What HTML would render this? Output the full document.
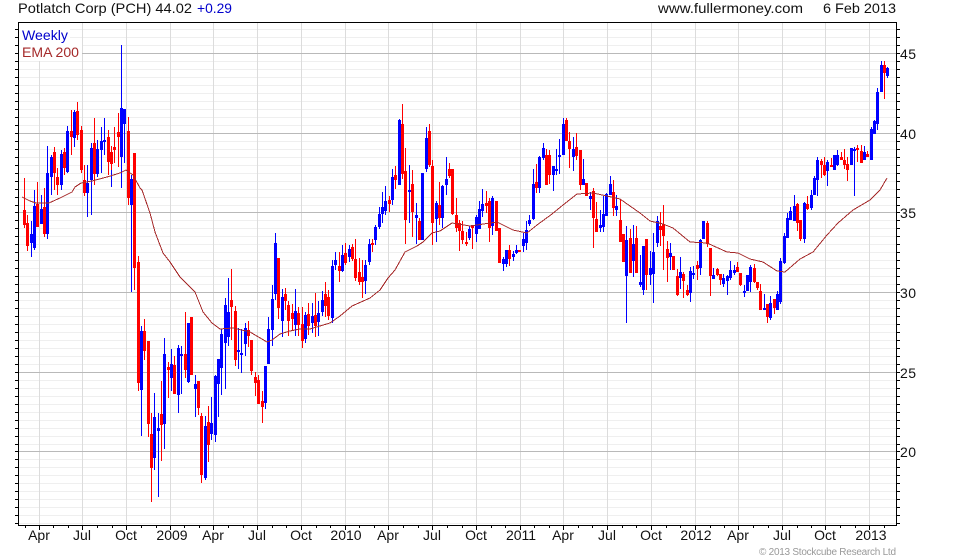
<!DOCTYPE html>
<html><head><meta charset="utf-8"><title>Potlatch Corp (PCH)</title>
<style>
html,body{margin:0;padding:0;background:#fff;width:980px;height:560px;overflow:hidden}
svg{display:block}
text{font-family:"Liberation Sans",Arial,sans-serif;font-size:14px;fill:#111}
.c{shape-rendering:crispEdges;fill:none}
</style></head><body>
<svg width="980" height="560" viewBox="0 0 980 560" xmlns="http://www.w3.org/2000/svg">
<rect width="980" height="560" fill="#fff"/>
<path class="c" stroke="#efefef" d="M19 29.5H896M19 37.5H896M19 45.5H896M19 61.5H896M19 69.5H896M19 77.5H896M19 85.5H896M19 93.5H896M19 101.5H896M19 109.5H896M19 117.5H896M19 125.5H896M19 141.5H896M19 149.5H896M19 157.5H896M19 165.5H896M19 173.5H896M19 181.5H896M19 189.5H896M19 197.5H896M19 205.5H896M19 220.5H896M19 228.5H896M19 236.5H896M19 244.5H896M19 252.5H896M19 260.5H896M19 268.5H896M19 276.5H896M19 284.5H896M19 300.5H896M19 308.5H896M19 316.5H896M19 324.5H896M19 332.5H896M19 340.5H896M19 348.5H896M19 356.5H896M19 364.5H896M19 380.5H896M19 388.5H896M19 396.5H896M19 404.5H896M19 412.5H896M19 420.5H896M19 428.5H896M19 436.5H896M19 444.5H896M19 459.5H896M19 467.5H896M19 475.5H896M19 483.5H896M19 491.5H896M19 499.5H896M19 507.5H896M19 515.5H896M19 523.5H896"/>
<path class="c" stroke="#dcdcdc" d="M39.5 23V525M82.5 23V525M126.5 23V525M170.5 23V525M213.5 23V525M257.5 23V525M301.5 23V525M345.5 23V525M388.5 23V525M432.5 23V525M476.5 23V525M520.5 23V525M563.5 23V525M607.5 23V525M651.5 23V525M695.5 23V525M738.5 23V525M782.5 23V525M825.5 23V525M869.5 23V525"/>
<path class="c" stroke="#b9b9b9" d="M19 53.5H896M19 133.5H896M19 212.5H896M19 292.5H896M19 372.5H896M19 451.5H896"/>
<rect x="19" y="23" width="51" height="18" fill="#fff"/>
<rect x="19" y="41" width="63" height="20" fill="#fff"/>
<path class="c" stroke="#000" d="M18.5 22.5H896.5V525.5H18.5Z"/>
<path class="c" stroke="#000" d="M15 29.5H18M15 37.5H18M15 45.5H18M15 53.5H18M15 61.5H18M15 69.5H18M15 77.5H18M15 85.5H18M15 93.5H18M15 101.5H18M15 109.5H18M15 117.5H18M15 125.5H18M15 133.5H18M15 141.5H18M15 149.5H18M15 157.5H18M15 165.5H18M15 173.5H18M15 181.5H18M15 189.5H18M15 197.5H18M15 205.5H18M15 212.5H18M15 220.5H18M15 228.5H18M15 236.5H18M15 244.5H18M15 252.5H18M15 260.5H18M15 268.5H18M15 276.5H18M15 284.5H18M15 292.5H18M15 300.5H18M15 308.5H18M15 316.5H18M15 324.5H18M15 332.5H18M15 340.5H18M15 348.5H18M15 356.5H18M15 364.5H18M15 372.5H18M15 380.5H18M15 388.5H18M15 396.5H18M15 404.5H18M15 412.5H18M15 420.5H18M15 428.5H18M15 436.5H18M15 444.5H18M15 451.5H18M15 459.5H18M15 467.5H18M15 475.5H18M15 483.5H18M15 491.5H18M15 499.5H18M15 507.5H18M15 515.5H18M15 523.5H18"/>
<path class="c" stroke="#000" d="M897 29.5H900M897 37.5H900M897 45.5H900M897 53.5H900M897 61.5H900M897 69.5H900M897 77.5H900M897 85.5H900M897 93.5H900M897 101.5H900M897 109.5H900M897 117.5H900M897 125.5H900M897 133.5H900M897 141.5H900M897 149.5H900M897 157.5H900M897 165.5H900M897 173.5H900M897 181.5H900M897 189.5H900M897 197.5H900M897 205.5H900M897 212.5H900M897 220.5H900M897 228.5H900M897 236.5H900M897 244.5H900M897 252.5H900M897 260.5H900M897 268.5H900M897 276.5H900M897 284.5H900M897 292.5H900M897 300.5H900M897 308.5H900M897 316.5H900M897 324.5H900M897 332.5H900M897 340.5H900M897 348.5H900M897 356.5H900M897 364.5H900M897 372.5H900M897 380.5H900M897 388.5H900M897 396.5H900M897 404.5H900M897 412.5H900M897 420.5H900M897 428.5H900M897 436.5H900M897 444.5H900M897 451.5H900M897 459.5H900M897 467.5H900M897 475.5H900M897 483.5H900M897 491.5H900M897 499.5H900M897 507.5H900M897 515.5H900M897 523.5H900"/>
<path class="c" stroke="#000" d="M39.5 526V530M82.5 526V530M126.5 526V530M170.5 526V530M213.5 526V530M257.5 526V530M301.5 526V530M345.5 526V530M388.5 526V530M432.5 526V530M476.5 526V530M520.5 526V530M563.5 526V530M607.5 526V530M651.5 526V530M695.5 526V530M738.5 526V530M782.5 526V530M825.5 526V530M869.5 526V530M25.5 526V528M53.5 526V528M68.5 526V528M97.5 526V528M112.5 526V528M141.5 526V528M156.5 526V528M184.5 526V528M199.5 526V528M228.5 526V528M243.5 526V528M272.5 526V528M286.5 526V528M316.5 526V528M330.5 526V528M359.5 526V528M374.5 526V528M403.5 526V528M418.5 526V528M447.5 526V528M462.5 526V528M491.5 526V528M505.5 526V528M534.5 526V528M549.5 526V528M578.5 526V528M592.5 526V528M622.5 526V528M636.5 526V528M666.5 526V528M680.5 526V528M710.5 526V528M724.5 526V528M753.5 526V528M768.5 526V528M797.5 526V528M811.5 526V528M840.5 526V528M855.5 526V528M884.5 526V528"/>

<!-- blue wicks -->
<path class="c" stroke="#0000ff" d="M31.5 221V257M34.5 190V250M41.5 195V224M47.5 146V239M51.5 155V195M61.5 150V190M67.5 126V173M74.5 110V147M87.5 165V217M91.5 143V215M97.5 140V177M101.5 127V173M104.5 118V155M111.5 164V187M121.5 45V188M124.5 109V163M131.5 175V292M141.5 326V436M154.5 393V470M158.5 413V497M164.5 338V449M171.5 349V391M178.5 345V413M181.5 346V394M188.5 323V383M195.5 375V417M205.5 416V480M211.5 397V440M215.5 375V442M218.5 359V417M221.5 329V395M225.5 298V389M228.5 278V346M238.5 328V369M241.5 329V373M245.5 323V356M265.5 366V409M268.5 317V364M272.5 285V346M275.5 233V300M282.5 289V337M295.5 289V336M305.5 312V343M312.5 303V333M318.5 301V336M322.5 291V316M332.5 260V323M335.5 252V270M342.5 245V272M349.5 245V262M365.5 260V294M369.5 239V265M375.5 225V245M379.5 207V229M382.5 192V223M385.5 186V215M392.5 169V205M399.5 119V185M409.5 165V223M416.5 203V244M422.5 173V240M426.5 127V172M436.5 201V242M442.5 185V228M446.5 157V195M469.5 226V240M476.5 215V242M479.5 201V229M482.5 189V217M492.5 196V235M503.5 257V271M506.5 250V267M513.5 251V261M516.5 245V254M523.5 233V252M526.5 221V250M529.5 215V226M533.5 169V220M539.5 156V193M543.5 143V160M553.5 166V191M556.5 149V175M559.5 139V174M563.5 118V155M573.5 137V171M583.5 159V185M590.5 192V210M600.5 210V232M603.5 196V232M606.5 193V216M610.5 176V195M616.5 195V216M626.5 226V323M633.5 225V277M640.5 255V287M643.5 246V295M650.5 251V285M653.5 233V303M657.5 216V247M670.5 243V270M680.5 257V289M690.5 267V302M693.5 266V279M700.5 239V275M703.5 221V239M713.5 268V279M723.5 274V287M727.5 275V295M730.5 261V280M734.5 265V275M744.5 285V297M747.5 275V291M750.5 265V292M764.5 294V310M770.5 296V320M777.5 291V310M780.5 258V304M784.5 233V264M787.5 213V238M790.5 207V220M794.5 195V221M804.5 202V243M811.5 190V210M814.5 176V195M817.5 157V196M827.5 160V186M834.5 155V170M837.5 150V166M851.5 148V165M854.5 147V196M864.5 146V160M871.5 127V160M874.5 120V134M877.5 88V130M881.5 61V92M887.5 67V78"/>
<!-- red wicks -->
<path class="c" stroke="#ff0000" d="M24.5 178V228M27.5 215V251M37.5 182V227M44.5 188V237M54.5 147V190M57.5 168V195M64.5 148V175M71.5 110V155M77.5 102V140M81.5 126V173M84.5 165V196M94.5 118V185M108.5 130V175M111.5 146V170M114.5 127V163M118.5 113V167M128.5 117V205M134.5 153V290M138.5 256V391M144.5 319V360M148.5 341V437M151.5 413V502M161.5 381V461M168.5 362V398M174.5 356V394M185.5 312V378M191.5 317V375M198.5 381V415M201.5 413V483M208.5 406V462M231.5 269V340M235.5 306V366M248.5 321V347M251.5 340V375M255.5 372V396M258.5 375V404M262.5 391V423M278.5 258V319M285.5 288V310M288.5 301V336M292.5 304V330M298.5 307V336M302.5 307V348M308.5 303V335M315.5 293V337M325.5 282V317M328.5 290V320M339.5 252V282M345.5 243V265M352.5 244V261M355.5 239V281M359.5 258V285M362.5 260V298M372.5 239V252M389.5 196V212M395.5 166V189M402.5 104V179M405.5 148V244M412.5 170V237M419.5 218V240M429.5 124V167M432.5 160V245M439.5 182V225M449.5 163V178M452.5 169V215M456.5 198V232M459.5 220V251M462.5 221V244M466.5 232V246M472.5 225V249M486.5 191V213M489.5 198V242M496.5 201V231M499.5 228V263M509.5 245V266M519.5 250V252M536.5 164V193M546.5 149V185M549.5 150V184M566.5 118V141M569.5 132V168M576.5 133V160M580.5 150V190M586.5 183V196M593.5 188V248M596.5 202V232M613.5 180V216M620.5 200V242M623.5 234V262M630.5 229V273M636.5 226V273M646.5 239V290M660.5 212V246M663.5 205V270M667.5 241V282M673.5 256V270M677.5 269V296M683.5 272V298M687.5 285V296M697.5 261V280M707.5 221V247M710.5 248V296M717.5 268V276M720.5 274V285M737.5 262V272M740.5 273V286M754.5 264V283M757.5 282V290M760.5 284V310M767.5 304V323M774.5 299V314M797.5 203V231M800.5 220V241M807.5 196V210M821.5 159V178M824.5 157V176M831.5 158V167M841.5 152V160M844.5 149V169M847.5 157V181M857.5 145V162M861.5 145V163M867.5 151V157M884.5 61V99"/>
<!-- blue bodies -->
<path class="c" stroke="#0000ff" stroke-width="3" d="M31.5 234V243M34.5 206V248M41.5 209V224M47.5 173V234M51.5 157V177M61.5 154V185M67.5 131V172M74.5 112V138M87.5 183V193M91.5 148V180M97.5 149V174M101.5 141V150M104.5 140V142M121.5 108V157M124.5 109V124M131.5 179V205M141.5 331V390M154.5 417V458M158.5 428V431M164.5 354V424M171.5 364V378M178.5 348V395M181.5 354V356M188.5 323V382M195.5 384V389M205.5 426V478M211.5 423V434M215.5 376V435M218.5 359V384M221.5 334V368M225.5 305V343M228.5 312V337M238.5 350V352M241.5 353V355M245.5 328V344M265.5 366V403M268.5 329V364M272.5 299V330M275.5 243V294M282.5 297V321M295.5 311V325M305.5 315V339M312.5 316V323M318.5 313V322M322.5 300V312M332.5 266V318M335.5 260V265M342.5 255V271M349.5 249V257M365.5 265V281M369.5 244V262M375.5 227V240M379.5 214V227M382.5 207V214M385.5 201V211M392.5 177V200M399.5 120V185M409.5 190V192M416.5 215V218M422.5 173V240M426.5 138V169M436.5 203V219M442.5 186V218M446.5 179V185M469.5 229V238M476.5 217V234M479.5 209V229M482.5 204V211M492.5 198V226M503.5 259V264M506.5 250V264M513.5 254V257M516.5 250V253M523.5 239V246M526.5 230V243M529.5 220V224M533.5 184V219M539.5 157V188M543.5 148V158M553.5 166V175M556.5 169V171M559.5 155V157M563.5 124V155M573.5 149V157M583.5 179V185M590.5 196V199M600.5 225V228M603.5 214V227M606.5 194V216M610.5 184V195M616.5 206V210M626.5 240V276M633.5 244V261M640.5 282V285M643.5 246V290M650.5 268V275M653.5 252V274M657.5 221V243M670.5 253V257M680.5 272V278M690.5 271V293M693.5 273V275M700.5 240V268M703.5 221V239M713.5 275V279M723.5 278V284M727.5 276V281M730.5 270V278M734.5 270V273M744.5 291V293M747.5 275V291M750.5 267V282M764.5 308V310M770.5 303V318M777.5 294V310M780.5 261V302M784.5 236V263M787.5 218V238M790.5 211V220M794.5 206V221M804.5 203V239M811.5 195V208M814.5 178V195M817.5 160V180M827.5 162V171M834.5 155V170M837.5 155V165M851.5 148V165M854.5 149V151M864.5 152V160M871.5 129V160M874.5 121V134M877.5 92V124M881.5 65V92M887.5 68V76"/>
<!-- red bodies -->
<path class="c" stroke="#ff0000" stroke-width="3" d="M24.5 210V225M27.5 223V246M37.5 204V227M44.5 207V234M54.5 152V173M57.5 177V185M64.5 152V168M71.5 131V137M77.5 111V135M81.5 130V170M84.5 180V193M94.5 143V174M108.5 137V162M111.5 152V164M114.5 147V150M118.5 132V137M128.5 131V198M134.5 153V268M138.5 262V383M144.5 331V351M148.5 341V424M151.5 434V468M161.5 414V425M168.5 367V370M174.5 365V394M185.5 354V370M191.5 317V375M198.5 381V408M201.5 416V475M208.5 422V445M231.5 300V307M235.5 311V360M248.5 330V336M251.5 340V371M255.5 377V383M258.5 380V404M262.5 401V407M278.5 258V308M285.5 294V301M288.5 305V321M292.5 313V319M298.5 313V325M302.5 324V341M308.5 314V326M315.5 315V326M325.5 294V306M328.5 297V316M339.5 266V271M345.5 253V263M352.5 247V259M355.5 259V278M359.5 272V282M362.5 277V282M372.5 243V245M389.5 200V204M395.5 175V180M402.5 124V174M405.5 171V220M412.5 184V212M419.5 221V240M429.5 131V165M432.5 166V223M439.5 205V218M449.5 169V176M452.5 169V214M456.5 215V228M459.5 223V231M462.5 231V240M466.5 242V244M472.5 225V228M486.5 203V206M489.5 201V228M496.5 201V231M499.5 228V263M509.5 250V259M519.5 250V252M536.5 182V188M546.5 155V185M549.5 155V175M566.5 120V141M569.5 141V149M576.5 147V156M580.5 150V185M586.5 183V196M593.5 191V218M596.5 219V232M613.5 192V208M620.5 220V242M623.5 234V262M630.5 238V273M636.5 238V273M646.5 239V275M660.5 226V230M663.5 224V236M667.5 249V258M673.5 256V270M677.5 276V295M683.5 274V281M687.5 290V295M697.5 265V269M707.5 223V244M710.5 248V276M717.5 269V275M720.5 274V280M737.5 267V272M740.5 273V285M754.5 268V282M757.5 282V288M760.5 291V310M767.5 304V317M774.5 299V308M797.5 204V223M800.5 220V239M807.5 204V209M821.5 161V165M824.5 165V175M831.5 165V167M841.5 157V160M844.5 160V165M847.5 164V170M857.5 148V150M861.5 151V163M867.5 154V157M884.5 65V73"/>
<!-- EMA -->
<polyline class="c" stroke="#a52a2a" points="22,197 30,201 36,203 49,203 60,198 72,192 75,187 81,183 92,181 107,177 120,173 126,170 133,175 140,188 142,190 150,213 155,232 163,253 170,262 180,277 195,292 203,312 212,323 220,329 233,328 250,332 267,342 272,340 280,334 290,331 300,329 310,329 320,326 330,323 340,316 352,306 370,298 380,290 388,278 395,270 405,252 417,246 423,242 432,233 440,231 452,223 470,226 497,222 513,230 527,233 537,225 552,214 563,205 577,194 593,193 607,196 620,199 640,213 650,221 663,224 673,228 690,242 707,243 727,252 738,253 750,259 763,262 777,271 785,272 800,259 813,252 827,235 838,223 853,210 870,200 880,190 887,178"/>

<text x="18" y="13" textLength="174" lengthAdjust="spacingAndGlyphs">Potlatch Corp (PCH) 44.02</text>
<text x="197" y="13" textLength="35" lengthAdjust="spacingAndGlyphs" style="fill:#0000cc">+0.29</text>
<text x="658" y="13" textLength="145" lengthAdjust="spacingAndGlyphs">www.fullermoney.com</text>
<text x="823" y="13" textLength="73" lengthAdjust="spacingAndGlyphs">6 Feb 2013</text>
<text x="22" y="40" textLength="46" lengthAdjust="spacingAndGlyphs" style="fill:#0000cc">Weekly</text>
<text x="22" y="57" textLength="57" lengthAdjust="spacingAndGlyphs" style="fill:#a52a2a">EMA 200</text>
<g>
<text x="900" y="59" textLength="16">45</text>
<text x="900" y="139" textLength="16">40</text>
<text x="900" y="218" textLength="16">35</text>
<text x="900" y="298" textLength="16">30</text>
<text x="900" y="378" textLength="16">25</text>
<text x="900" y="457" textLength="16">20</text>
</g>
<g text-anchor="middle">
<text x="39" y="540">Apr</text>
<text x="82" y="540">Jul</text>
<text x="126" y="540">Oct</text>
<text x="172" y="540">2009</text>
<text x="213" y="540">Apr</text>
<text x="257" y="540">Jul</text>
<text x="301" y="540">Oct</text>
<text x="346" y="540">2010</text>
<text x="388" y="540">Apr</text>
<text x="432" y="540">Jul</text>
<text x="476" y="540">Oct</text>
<text x="521" y="540">2011</text>
<text x="563" y="540">Apr</text>
<text x="607" y="540">Jul</text>
<text x="651" y="540">Oct</text>
<text x="696" y="540">2012</text>
<text x="738" y="540">Apr</text>
<text x="782" y="540">Jul</text>
<text x="825" y="540">Oct</text>
<text x="871" y="540">2013</text>
</g>
<text x="759" y="555" textLength="137" lengthAdjust="spacing" style="font-size:10px;fill:#999">© 2013 Stockcube Research Ltd</text>
</svg>
</body></html>
